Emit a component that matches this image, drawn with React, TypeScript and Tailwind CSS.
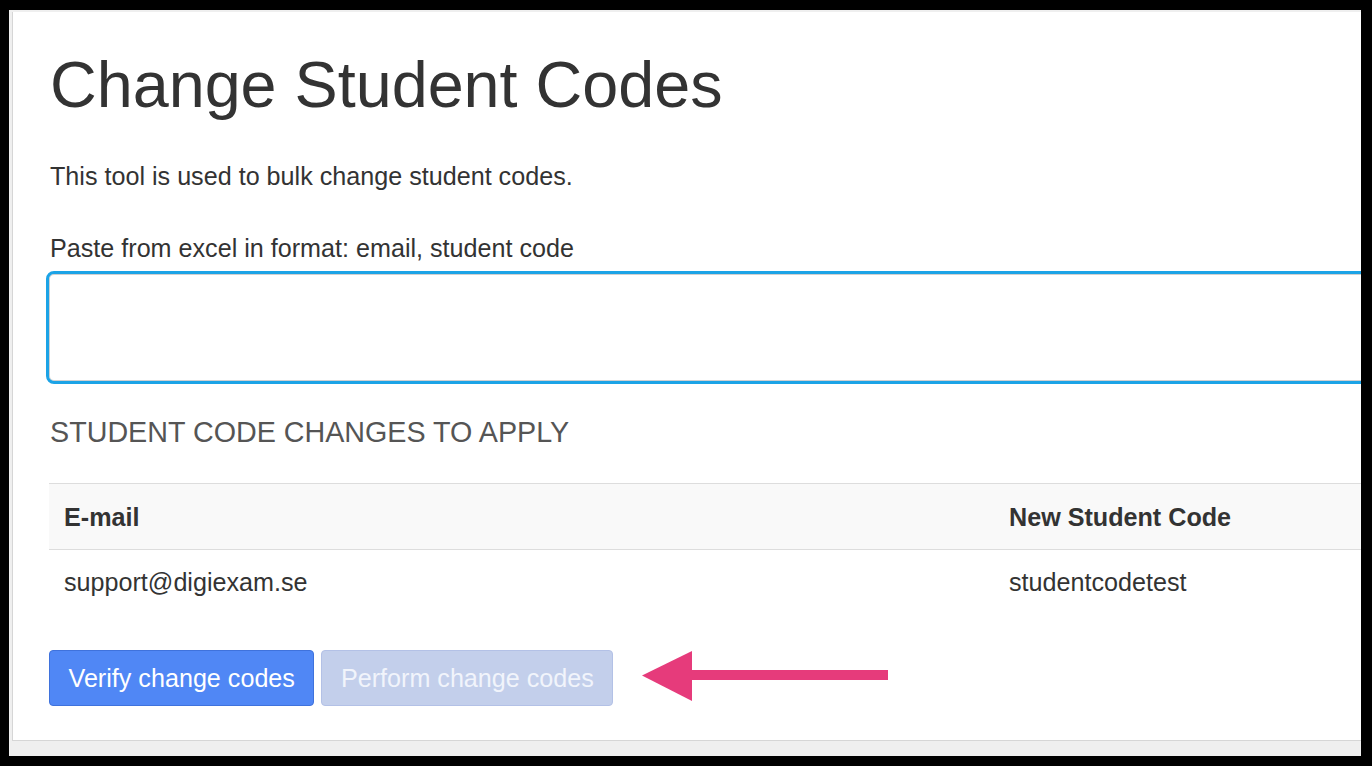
const rows = [{ email: "support@digiexam.se", code: "studentcodetest" }];

const PointerArrow = () => (
  <svg width="246" height="50" viewBox="0 0 246 50" className="ml-[29px] mt-[-4px] shrink-0">
    <polygon points="0,24.5 50,0 50,50" fill="#e63b7b" />
    <rect x="48" y="19" width="198" height="10" fill="#e63b7b" />
  </svg>
);

export default function App() {
  return (
    <div
      className="h-[766px] w-[1372px] overflow-hidden bg-black pb-[10px] pl-[9px] pr-[11px] pt-[10px] text-[#333]"
      style={{ fontFamily: '"Liberation Sans", Arial, Helvetica, sans-serif' }}
    >
      <div className="h-full overflow-hidden bg-[#efefef] pl-[3px] pt-[2px]">
        <div className="h-[729px] w-[1500px] border-b border-l border-[#d6d6d6] bg-white pl-[36px] pt-[37px]">
          <h1 className="pl-[1px] text-[64.7px] font-normal leading-[72px] text-[#333]">
            Change Student Codes
          </h1>

          <p className="mt-[37px] pl-[1px] text-[25.15px] leading-[36px]">
            This tool is used to bulk change student codes.
          </p>

          <label className="mt-[36px] block pl-[1px] text-[25.15px] leading-[36px]">
            Paste from excel in format: email, student code
          </label>

          <textarea
            className="ml-[-3px] mt-[5px] block h-[113px] w-[1400px] resize-none rounded-[8px] border-[3px] border-[#1ca3e6] bg-white shadow-[inset_0_0_0_1px_#d0d0d0] outline-none"
            defaultValue=""
          />

          <h3 className="mt-[28px] pl-[1px] text-[28.7px] font-normal uppercase leading-[40px] text-[#555]">
            Student code changes to apply
          </h3>

          <table className="mt-[31px] w-[1400px] border-collapse text-[25.15px] leading-[36px]">
            <thead>
              <tr className="h-[66px] border-b border-t border-[#dddddd] bg-[#f9f9f9]">
                <th className="w-[945px] px-[15px] text-left font-bold">E-mail</th>
                <th className="px-[15px] text-left font-bold">New Student Code</th>
              </tr>
            </thead>
            <tbody>
              {rows.map((row) => (
                <tr key={row.email} className="h-[65px]">
                  <td className="px-[15px]">{row.email}</td>
                  <td className="px-[15px]">{row.code}</td>
                </tr>
              ))}
            </tbody>
          </table>

          <div className="mt-[35px] flex items-center">
            <button
              type="button"
              className="h-[56px] rounded-[4px] border border-[#3f72dc] bg-[#5087f5] px-[18.5px] text-[25.15px] leading-[36px] text-white"
            >
              Verify change codes
            </button>
            <button
              type="button"
              disabled
              className="ml-[7px] h-[56px] rounded-[4px] border border-[#b3c1e6] bg-[#c3cfeb] px-[18.5px] text-[25.15px] leading-[36px] text-[#f1f4fb]"
            >
              Perform change codes
            </button>
            <PointerArrow />
          </div>
        </div>
      </div>
    </div>
  );
}
